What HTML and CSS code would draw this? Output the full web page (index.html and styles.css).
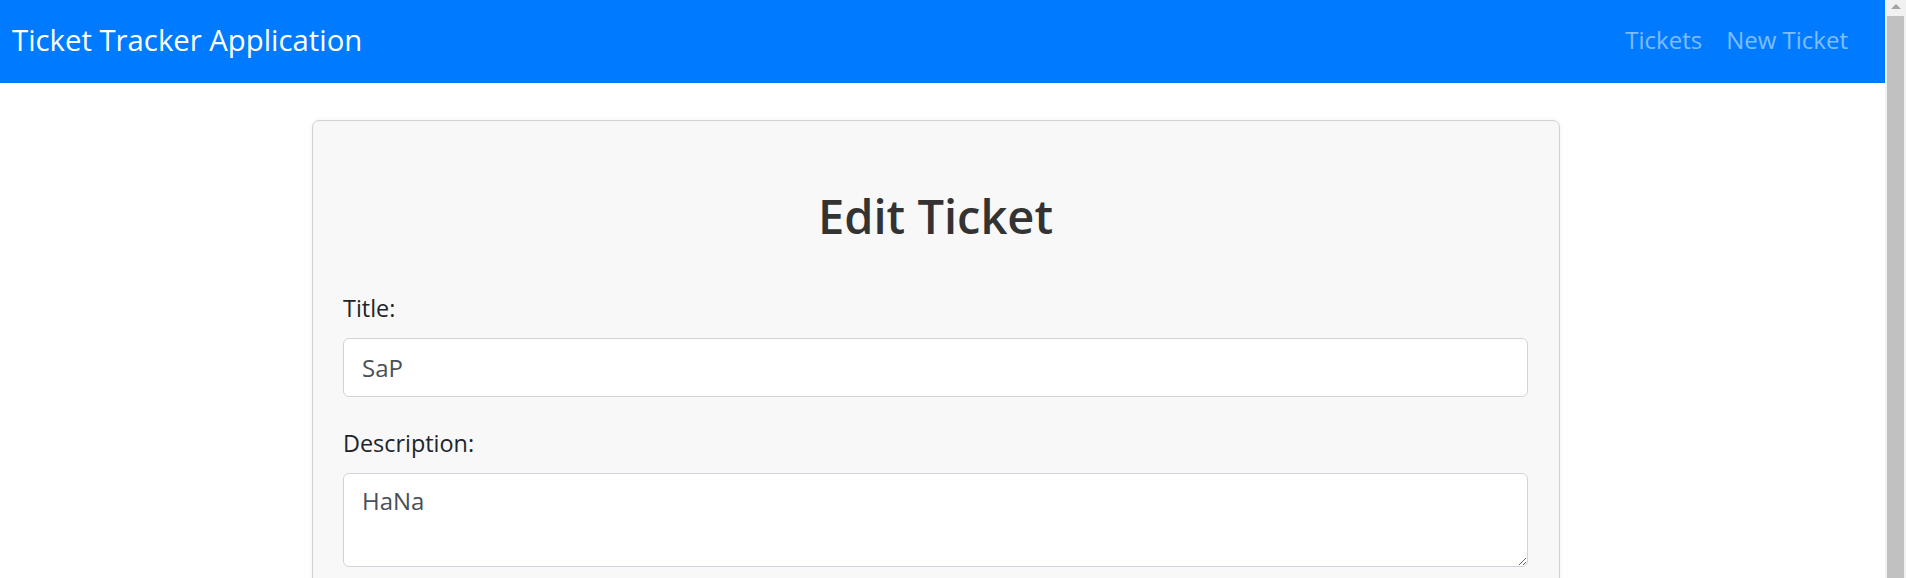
FILE: index.html
```html
<!DOCTYPE html>
<html lang="en">
<head>
<meta charset="utf-8">
<title>Ticket Tracker Application</title>
<link rel="stylesheet" href="styles.css">
</head>
<body>
<div class="page">
  <nav class="navbar">
    <a class="brand" href="#">Ticket Tracker Application</a>
    <div class="nav">
      <a class="nav-link" href="#">Tickets</a>
      <a class="nav-link" href="#">New Ticket</a>
    </div>
  </nav>
  <main class="main">
    <div class="card">
      <h2 class="card-title">Edit Ticket</h2>
      <form class="form">
        <div class="form-group">
          <label class="label" for="title">Title:</label>
          <input class="input" id="title" type="text" value="SaP">
        </div>
        <div class="form-group">
          <label class="label" for="desc">Description:</label>
          <textarea class="input textarea" id="desc" rows="2">HaNa</textarea>
        </div>
        <div class="form-group">
          <button class="btn" type="button">Update Ticket</button>
        </div>
      </form>
    </div>
  </main>
</div>
<div class="scrollbar">
  <div class="scroll-arrow"></div>
  <div class="scroll-thumb"></div>
</div>
</body>
</html>
```

FILE: styles.css
```css
* { box-sizing: border-box; }

html, body {
  margin: 0;
  height: 100%;
  overflow: hidden;
}

body {
  display: flex;
  font-family: "Open Sans", "Noto Sans", "Liberation Sans", sans-serif;
  background: #ffffff;
  color: #212529;
}

.page {
  flex: 1;
  height: 100vh;
  overflow: hidden;
}

.navbar {
  height: 83px;
  background: #007bff;
  display: flex;
  align-items: center;
  justify-content: space-between;
  padding: 0 25px 3px 12px;
}

.brand {
  color: #ffffff;
  font-size: 29.3px;
  line-height: 42px;
  text-decoration: none;
  white-space: nowrap;
}

.nav {
  display: flex;
  align-items: center;
}

.nav-link {
  color: rgba(255, 255, 255, 0.5);
  font-size: 24px;
  line-height: 36px;
  padding: 0 12px;
  text-decoration: none;
}

.main {
  padding: 37px 0 0 312px;
}

.card {
  width: 1248px;
  background: #f8f8f8;
  border: 1px solid #d2d2d2;
  border-radius: 7px;
  box-shadow: 0 0 5px rgba(0, 0, 0, 0.06);
  padding: 66px 31px 30px 30px;
}

.card-title {
  margin: 0 0 45px;
  text-align: center;
  font-size: 47px;
  line-height: 58px;
  font-weight: 600;
  color: #333333;
}

.form-group {
  margin-bottom: 28px;
}

.label {
  display: block;
  font-size: 23.4px;
  line-height: 36px;
  margin-bottom: 12px;
  color: #212529;
}

.input {
  display: block;
  width: 100%;
  height: 59px;
  padding: 0 18px;
  font-family: inherit;
  font-size: 24px;
  line-height: 36px;
  color: #495057;
  background: #ffffff;
  border: 1px solid #ced4da;
  border-radius: 6px;
  outline: none;
}

.textarea {
  height: 94px;
  padding: 9px 18px;
  resize: vertical;
}

.btn {
  font-family: inherit;
  font-size: 24px;
  line-height: 36px;
  padding: 9px 18px;
  color: #ffffff;
  background: #007bff;
  border: 1px solid #007bff;
  border-radius: 6px;
}

.scrollbar {
  width: 21px;
  height: 100vh;
  background: #f1f1f1;
  display: flex;
  flex-direction: column;
  align-items: center;
  padding-top: 4px;
}

.scroll-arrow {
  width: 0;
  height: 0;
  border-left: 5px solid transparent;
  border-right: 5px solid transparent;
  border-bottom: 5px solid #a3a3a3;
  margin-bottom: 7px;
}

.scroll-thumb {
  width: 17px;
  flex: 1;
  background: #c1c1c1;
}
```
